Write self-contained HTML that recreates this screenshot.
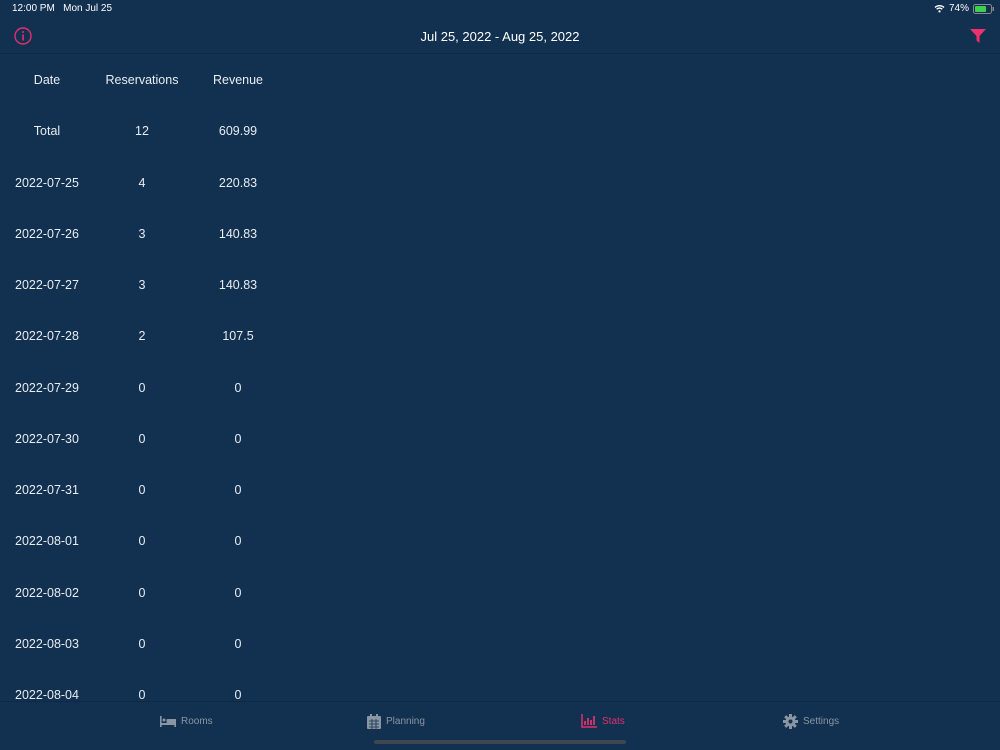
<!DOCTYPE html>
<html><head><meta charset="utf-8"><style>
*{margin:0;padding:0;box-sizing:border-box}
body{width:1000px;height:750px;background:#12304f;font-family:"Liberation Sans",sans-serif;color:#e8edf2;position:relative;overflow:hidden}
.abs{position:absolute}
.c{position:absolute;width:120px;text-align:center;font-size:12.5px;transform:translateX(-60px)}
.tab{position:absolute;top:713px;height:16px;font-size:10px;color:#8a96a3;display:flex;align-items:center;gap:5px}
</style></head><body>
<div class="abs" style="left:12px;top:3px;font-size:10px;color:#fff">12:00 PM&nbsp;&nbsp;&nbsp;Mon Jul 25</div>
<div class="abs" style="left:934px;top:3px;font-size:10px;color:#fff;display:flex;align-items:center;gap:4px">
<svg width="11" height="9" viewBox="0 0 11 9"><path d="M1 3.5a6.5 6.5 0 0 1 9 0M2.7 5.2a4 4 0 0 1 5.6 0" stroke="#fff" stroke-width="1.4" fill="none"/><circle cx="5.5" cy="7.4" r="1.1" fill="#fff"/></svg>74%
<svg width="22" height="10" viewBox="0 0 22 10"><rect x="0.5" y="0.5" width="18" height="9" rx="2" stroke="#888" fill="none"/><rect x="2" y="2" width="11" height="6" rx="1" fill="#3ed14f"/><rect x="19.5" y="3" width="1.5" height="4" fill="#888"/></svg></div>
<svg class="abs" style="left:14px;top:27px" width="18" height="18" viewBox="0 0 18 18"><circle cx="9" cy="9" r="8" stroke="#e0306e" stroke-width="1.4" fill="none"/><rect x="8.2" y="7.5" width="1.6" height="6" fill="#e0306e"/><circle cx="9" cy="5" r="1" fill="#e0306e"/></svg>
<div class="abs" style="left:0;width:1000px;top:29px;text-align:center;font-size:13px;color:#fff">Jul 25, 2022 - Aug 25, 2022</div>
<svg class="abs" style="left:970px;top:29px" width="16" height="14" viewBox="0 0 16 14"><path d="M0 0H16L9.5 7V14L6.5 11.5V7Z" fill="#f0306c"/></svg>
<div class="abs" style="left:0;top:53px;width:1000px;height:1px;background:#0e2945"></div>
<div id="t"></div>
<div class="abs" style="left:0;top:701px;width:1000px;height:49px;background:#12304f;border-top:1px solid #0e2945"></div>
<div class="tab" style="left:160px"><svg width="16" height="11" viewBox="0 0 16 11"><rect x="0" y="0" width="1.6" height="11" fill="#8a96a3"/><rect x="0" y="7" width="16" height="2" fill="#8a96a3"/><rect x="14.4" y="3" width="1.6" height="8" fill="#8a96a3"/><rect x="2.5" y="2.5" width="3" height="3" rx="1.5" fill="#8a96a3"/><rect x="6.5" y="3" width="9" height="4" rx="1" fill="#8a96a3"/></svg>Rooms</div>
<div class="tab" style="left:367px"><svg width="14" height="15" viewBox="0 0 14 15"><rect x="0" y="2" width="14" height="13" rx="1" fill="#8a96a3"/><rect x="3" y="0" width="2" height="3" fill="#8a96a3"/><rect x="9" y="0" width="2" height="3" fill="#8a96a3"/><path d="M2 7h10M2 10h10M2 13h10M5 5v10M9 5v10" stroke="#12304f" stroke-width="0.8"/></svg>Planning</div>
<div class="tab" style="left:581px;color:#e0306e"><svg width="16" height="14" viewBox="0 0 16 14"><path d="M1 0v13h15" stroke="#e0306e" stroke-width="1.5" fill="none"/><path d="M4 7v4M7 4v7M10 6v5M13 2v9" stroke="#e0306e" stroke-width="1.8"/></svg>Stats</div>
<div class="tab" style="left:783px"><svg width="15" height="15" viewBox="0 0 15 15"><circle cx="7.5" cy="7.5" r="5" fill="#8a96a3"/><path d="M7.5 0v15M0 7.5h15M2.2 2.2l10.6 10.6M12.8 2.2L2.2 12.8" stroke="#8a96a3" stroke-width="3"/><circle cx="7.5" cy="7.5" r="2" fill="#12304f"/></svg>Settings</div>
<div class="abs" style="left:374px;top:740px;width:252px;height:4px;border-radius:2px;background:#3e4650"></div>
<script>
var rows=[["Date","Reservations","Revenue"],["Total","12","609.99"],["2022-07-25","4","220.83"],["2022-07-26","3","140.83"],["2022-07-27","3","140.83"],["2022-07-28","2","107.5"],["2022-07-29","0","0"],["2022-07-30","0","0"],["2022-07-31","0","0"],["2022-08-01","0","0"],["2022-08-02","0","0"],["2022-08-03","0","0"],["2022-08-04","0","0"]];
var h="",xs=[47,142,238];
rows.forEach(function(r,i){r.forEach(function(v,j){h+='<div class="c" style="left:'+xs[j]+'px;top:'+(73+i*51.25)+'px">'+v+'</div>'})});
document.getElementById("t").innerHTML=h;
</script>
</body></html>
